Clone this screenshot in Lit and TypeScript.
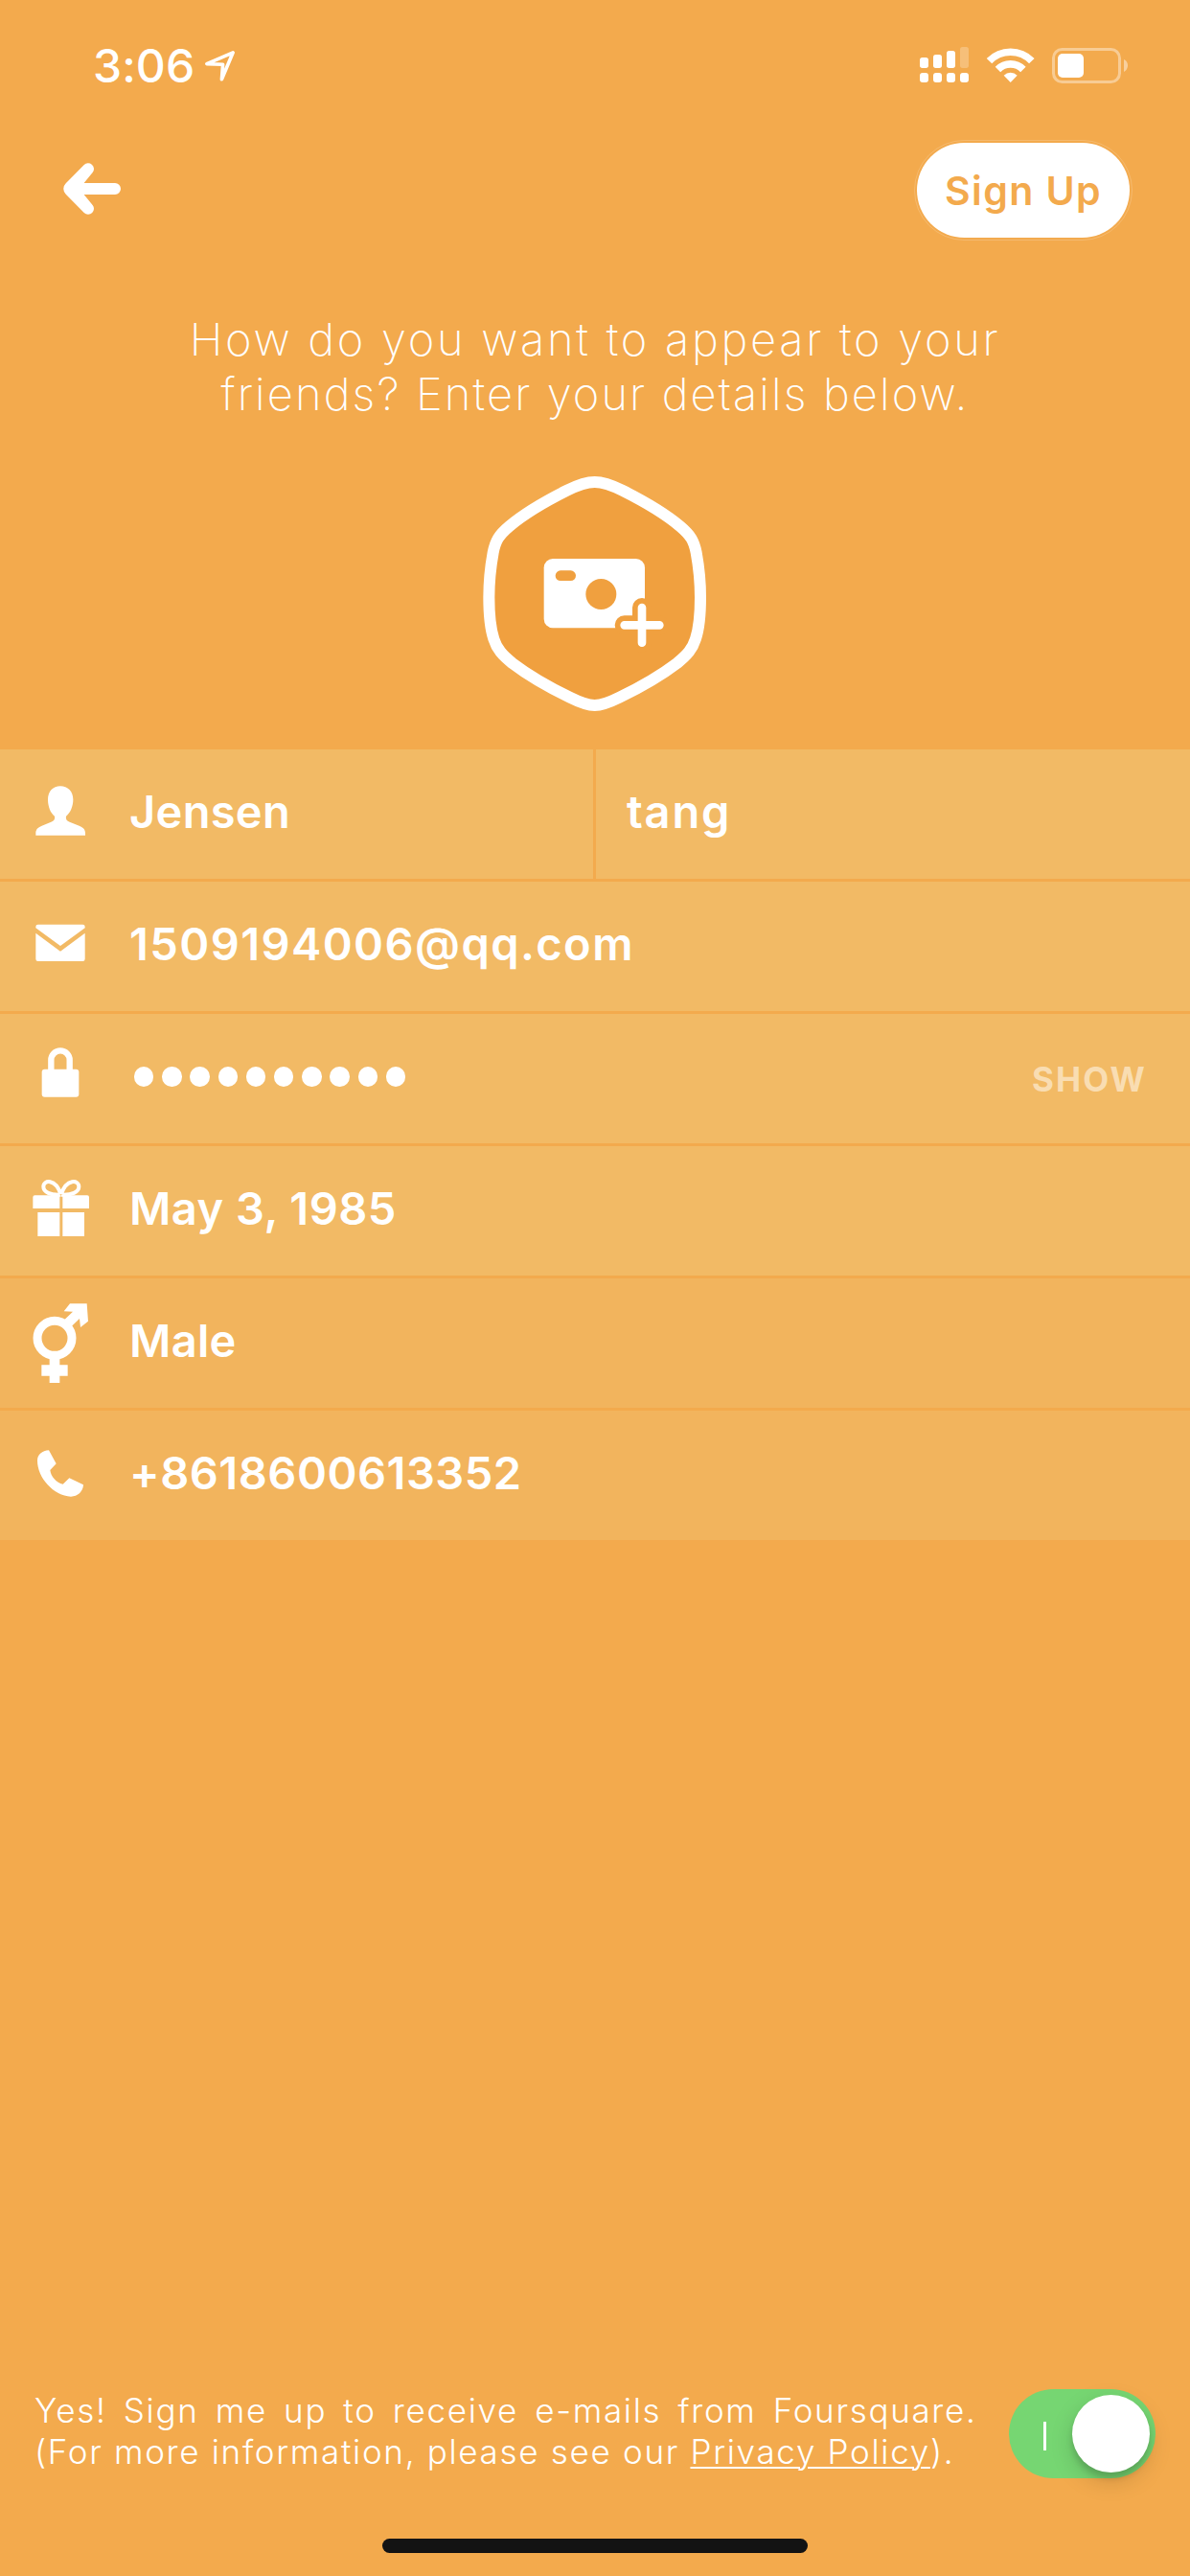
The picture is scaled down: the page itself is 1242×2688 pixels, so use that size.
import { LitElement, html, css, svg, nothing } from "lit";
import type { SVGTemplateResult } from "lit";
import { customElement, property, state } from "lit/decorators.js";
import { classMap } from "lit/directives/class-map.js";
import { styleMap } from "lit/directives/style-map.js";

/* Row icons share a 324x405 canvas: three units per pixel, origin at the row's top left. */
const ICONS: Record<string, SVGTemplateResult> = {
  person: svg`<path fill="#fff" d="M189 115C166 115 150 131 150 157C150 178 158 200 171 209C173 218 169 223 160 227L131 239C118 244 112 251 112 262V269H267V262C267 251 261 244 248 239L218 227C209 223 205 218 207 209C220 200 229 178 229 157C229 131 212 115 189 115Z"/>`,
  mail: svg`<path fill="#fff" d="M119 134H259Q266 134 266 141V145L189 201L112 145V141Q112 134 119 134ZM112 161L189 218L266 161V242Q266 249 259 249H119Q112 249 112 242Z"/>`,
  lock: svg`<rect x="131" y="173" width="116" height="87" rx="9" fill="#fff"/><path fill="none" stroke="#fff" stroke-width="19" d="M160 178V144A29 29 0 0 1 218 144V178"/>`,
  gift: svg`<path fill="#fff" d="M109 154H187V195H103V160Q103 154 109 154ZM196 154H273Q279 154 279 160V195H196ZM118 207H187V282H118ZM196 207H264V282H196Z"/><path fill="none" stroke="#fff" stroke-width="12" stroke-linejoin="round" d="M190 152C158 154 136 144 136 127C136 105 174 101 190 150M192 152C224 154 247 144 247 127C247 105 208 101 192 150"/>`,
  gender: svg`<circle cx="171" cy="187" r="54" fill="none" stroke="#fff" stroke-width="27"/><path fill="#fff" d="M155 248H187V271H212V305H187V327H155V305H130V271H155ZM200 103L219 79H272L276 134L252 153L249 126L224 150L202 129L228 104Z"/>`,
  phone: svg`<path fill="#fff" d="M153 124L176 166L157 186C159 206 177 226 197 230L217 211L261 232C260 254 243 269 222 269C168 266 117 211 117 156C117 138 132 125 153 124Z"/>`,
};

interface Field {
  icon: string;
  text?: string;
  spacing: number;
  dots?: number;
  action?: string;
  second?: { text: string; spacing: number };
  dim?: boolean;
}

const FIELDS: Field[] = [
  { icon: "person", text: "Jensen", spacing: 0.3, second: { text: "tang", spacing: 1.8 } },
  { icon: "mail", text: "1509194006@qq.com", spacing: 1.42 },
  { icon: "lock", dots: 10, spacing: 0, action: "SHOW" },
  { icon: "gift", text: "May 3, 1985", spacing: 0.5 },
  { icon: "gender", text: "Male", spacing: 0.3, dim: true },
  { icon: "phone", text: "+8618600613352", spacing: 0.52, dim: true },
];

@customElement("field-row")
class FieldRow extends LitElement {
  @property({ attribute: false }) field!: Field;

  static styles = css`
    :host { display: flex; gap: 3px; height: 135px; }
    .cell { flex: 1 1 0; min-width: 0; display: flex; align-items: center; background: #f2ba65; box-sizing: border-box; }
    .dim { background: #f2b45d; }
    .first { flex: 0 0 619px; }
    .icon { width: 108px; height: 135px; margin-right: 27px; flex: none; display: block; }
    .value { font-size: 47px; font-weight: 600; line-height: 60px; padding-bottom: 5px; white-space: nowrap; }
    .second { padding-left: 32px; }
    .dots { display: flex; gap: 8.8px; margin: 0 0 4px 5px; }
    .dot { width: 20.4px; height: 20.4px; border-radius: 50%; background: #fff; }
    .action { margin-left: auto; padding: 1px 45px 0 0; font-size: 35px; font-weight: 700; letter-spacing: 2.1px; color: #f9ddb2; }
  `;

  render() {
    const f = this.field;
    return html`
      <div class=${classMap({ cell: true, dim: !!f.dim, first: !!f.second })}>
        <svg class="icon" viewBox="0 0 324 405">${ICONS[f.icon]}</svg>
        ${f.dots
          ? html`<div class="dots">${Array.from({ length: f.dots }, () => html`<span class="dot"></span>`)}</div>`
          : html`<span class="value" style=${styleMap({ letterSpacing: `${f.spacing}px` })}>${f.text}</span>`}
        ${f.action ? html`<span class="action">${f.action}</span>` : nothing}
      </div>
      ${f.second
        ? html`<div class="cell second">
            <span class="value" style=${styleMap({ letterSpacing: `${f.second.spacing}px` })}>${f.second.text}</span>
          </div>`
        : nothing}
    `;
  }
}

@customElement("email-switch")
class EmailSwitch extends LitElement {
  @state() on = true;

  static styles = css`
    :host { display: block; }
    .track { width: 153px; height: 93px; border-radius: 47px; background: #76d672; display: flex; align-items: center; justify-content: space-between; box-sizing: border-box; padding: 0 6px 0 36px; }
    .bar { width: 3px; height: 30px; background: #fff; margin-top: 4px; }
    .knob { width: 81px; height: 81px; border-radius: 50%; background: #fff; box-shadow: 0 9px 24px rgba(0, 0, 0, 0.15), 0 6px 6px rgba(0, 0, 0, 0.14); }
    .off { background: #ddd; }
  `;

  render() {
    return html`<div class=${classMap({ track: true, off: !this.on })} @click=${() => (this.on = !this.on)}>
      <span class="bar"></span><span class="knob"></span>
    </div>`;
  }
}

@customElement("app-root")
class AppRoot extends LitElement {
  static styles = css`
    :host { display: flex; flex-direction: column; width: 1242px; height: 2688px; overflow: hidden; background: #f3aa4d; color: #fff; font-family: Inter, "Liberation Sans", sans-serif; }
    svg { display: block; flex: none; }
    .status { height: 137px; flex: none; display: flex; align-items: center; padding: 0 62px 0 97px; }
    .time { font-size: 48px; font-weight: 500; line-height: 60px; width: 105px; white-space: nowrap; letter-spacing: 0.1px; }
    .arrow { margin-left: 10px; }
    .system { margin-left: auto; }
    .nav { height: 123px; flex: none; display: flex; align-items: center; justify-content: space-between; padding: 0 60px 0 66px; }
    .back { margin-bottom: 3px; }
    .ring { padding: 2px; border: 1px solid rgba(255, 255, 255, 0.18); border-radius: 53px; }
    .signup { width: 222px; height: 99px; border-radius: 50px; background: #fff; color: #f3aa4d; font-size: 41px; font-weight: 600; letter-spacing: 1.4px; display: flex; align-items: center; justify-content: center; }
    .intro { margin: 65px 0 0; font-size: 47px; font-weight: 200; line-height: 57px; text-align: center; }
    .intro1, .intro2 { display: block; white-space: nowrap; }
    .intro1 { letter-spacing: 2.73px; }
    .intro2 { letter-spacing: 2.13px; }
    .photo { margin: 41px 0 22px 480px; }
    .form { display: flex; flex-direction: column; gap: 3px; }
    .footer { margin-top: auto; display: flex; align-items: flex-start; justify-content: space-between; padding: 0 36px 63px 36px; }
    .terms { margin: 1px 0 0; font-size: 35px; font-weight: 300; line-height: 43px; letter-spacing: 1.68px; white-space: nowrap; }
    .terms1, .terms2 { display: block; }
    .terms1 { word-spacing: 5.7px; }
    .link { text-decoration: underline; text-decoration-thickness: 2px; text-underline-offset: 3px; }
    .home { width: 444px; height: 15px; border-radius: 8px; background: #131313; margin: 0 auto 24px; flex: none; }
  `;

  render() {
    return html`
      <div class="status">
        <span class="time">3:06</span>
        <svg class="arrow" width="34" height="36" viewBox="212 50 34 36">
          <path fill="none" stroke="#fff" stroke-width="3.6" stroke-linejoin="round" d="M243.2 53.8L215.8 65.6L232.6 66.2L231.4 81.8Z"/>
        </svg>
        <svg class="system" width="220" height="40" viewBox="300 144 660 120">
          <g fill="#fff">
            <rect x="300" y="177" width="27" height="33" rx="8"/><rect x="342" y="168" width="27" height="42" rx="8"/>
            <rect x="384" y="156" width="27" height="54" rx="8"/><rect x="426" y="144" width="27" height="66" rx="8" opacity=".25"/>
            <rect x="300" y="225" width="27" height="30" rx="9"/><rect x="342" y="225" width="27" height="30" rx="9"/>
            <rect x="384" y="225" width="27" height="30" rx="9"/><rect x="426" y="225" width="27" height="30" rx="9"/>
            <path d="M584 255L563 233A30 30 0 0 1 605 233Z"/>
            <rect x="732" y="165" width="81" height="75" rx="15"/>
            <path d="M939 183Q951 188 951 202Q951 216 939 222Z" opacity=".45"/>
          </g>
          <path fill="none" stroke="#fff" stroke-width="23" d="M517.5 188A92.5 92.5 0 0 1 650.5 188M544.4 214.5A55 55 0 0 1 623.6 214.5"/>
          <rect x="718.5" y="151.5" width="207" height="102" rx="27" fill="none" stroke="#fff" stroke-width="9" opacity=".4"/>
        </svg>
      </div>

      <div class="nav">
        <svg class="back" width="60" height="54" viewBox="66 170 60 54">
          <path fill="#fff" stroke="#fff" stroke-width="12" stroke-linecap="round" stroke-linejoin="round" d="M120 197H76M92 176.300L73 195.500Q71.500 197 73 198.500L92 217.700L75 197Z"/>
          <path fill="#fff" d="M74 188L87 191H88V203H87L74 206Z"/>
        </svg>
        <div class="ring"><div class="signup">Sign Up</div></div>
      </div>

      <p class="intro">
        <span class="intro1">How do you want to appear to your</span>
        <span class="intro2">friends? Enter your details below.</span>
      </p>

      <svg class="photo" width="290" height="280" viewBox="0 0 870 840">
        <path fill="#f0a03f" stroke="#fff" stroke-width="36" d="M422 69C450 69 478 80 508 95C574 128 640 166 690 208C722 235 733 253 740 290C750 345 753 380 753 430C753 490 748 530 738 560C728 592 712 610 680 636C630 674 560 714 500 743C470 758 445 768 422 768C399 768 374 758 344 743C284 714 214 674 164 636C132 610 116 592 106 560C96 530 91 490 91 430C91 380 94 345 104 290C111 253 122 235 154 208C204 166 270 128 336 95C366 80 394 69 422 69Z"/>
        <rect x="263" y="309" width="316" height="217" rx="28" fill="#fff"/>
        <circle cx="442" cy="420" r="48" fill="#f0a03f"/>
        <rect x="299" y="346" width="64" height="32" rx="16" fill="#f0a03f"/>
        <path fill="none" stroke="#f0a03f" stroke-width="60" stroke-linecap="round" d="M570 462V572M515 517H625"/>
        <path fill="none" stroke="#fff" stroke-width="26" stroke-linecap="round" d="M570 462V572M515 517H625"/>
      </svg>

      <div class="form">${FIELDS.map((f) => html`<field-row .field=${f}></field-row>`)}</div>

      <div class="footer">
        <p class="terms">
          <span class="terms1">Yes! Sign me up to receive e-mails from Foursquare.</span>
          <span class="terms2">(For more information, please see our <span class="link">Privacy Policy</span>).</span>
        </p>
        <email-switch></email-switch>
      </div>
      <div class="home"></div>
    `;
  }
}
